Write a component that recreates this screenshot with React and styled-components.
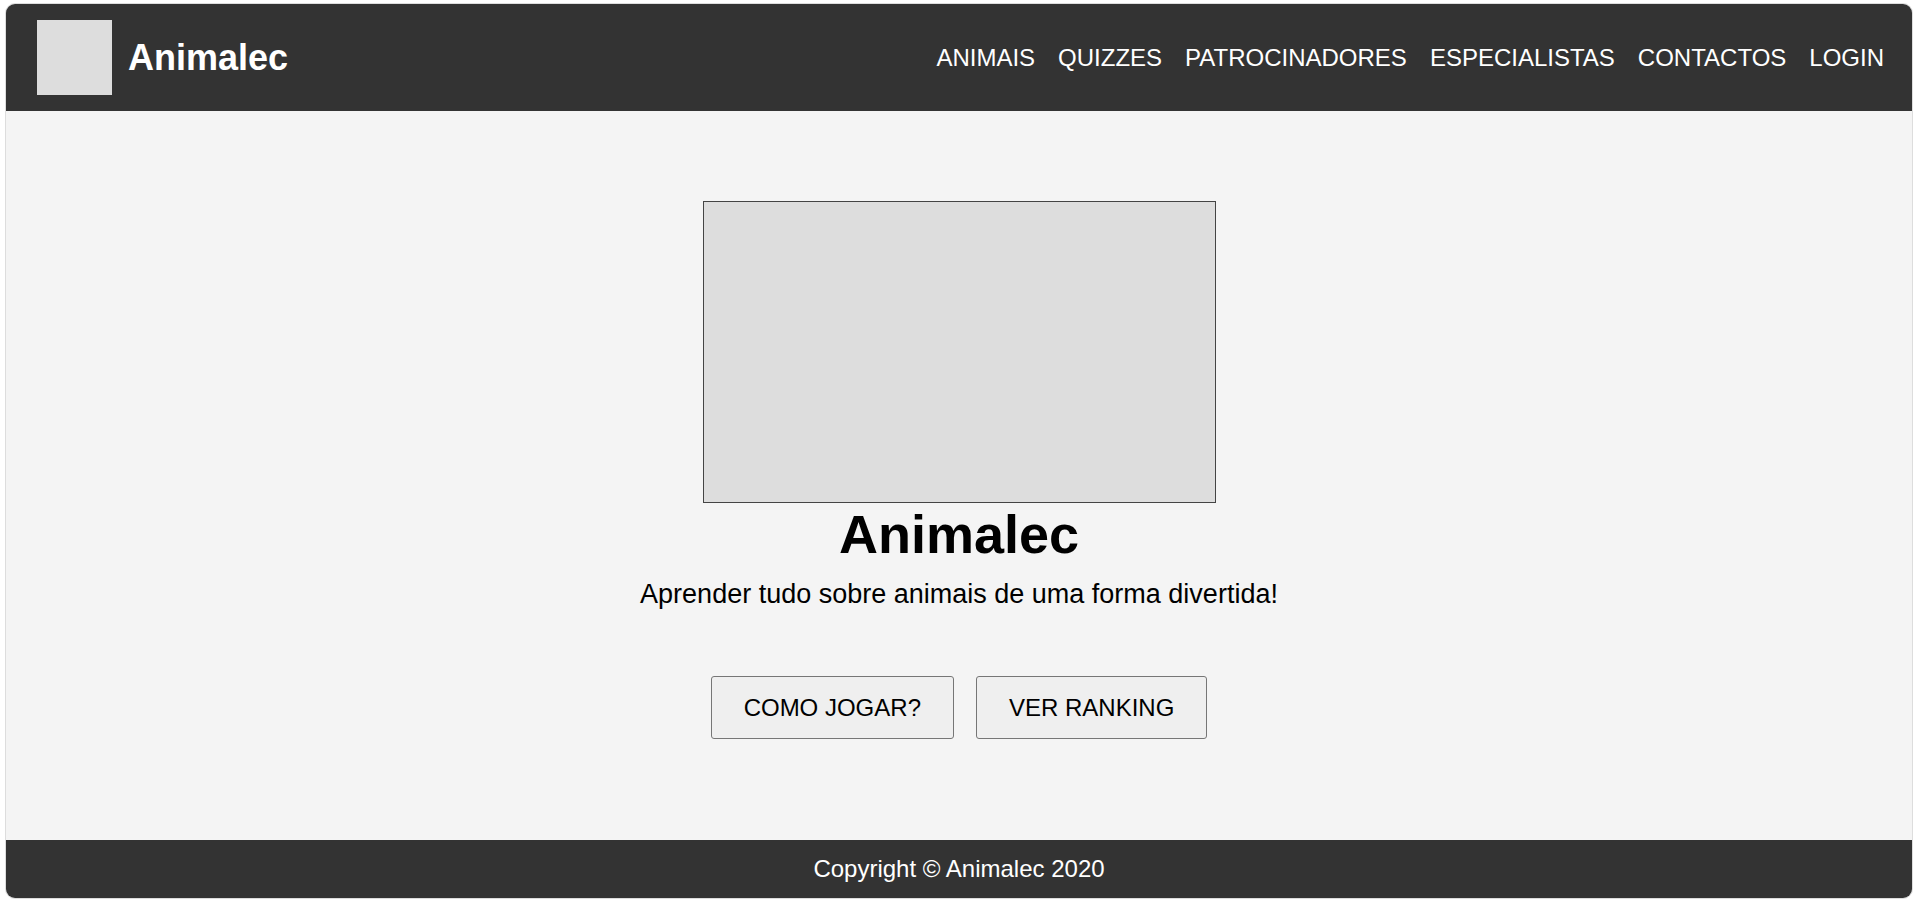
import React from 'react'
import styled, { createGlobalStyle } from 'styled-components'

const GlobalStyle = createGlobalStyle`
  html, body {
    padding: 0;
    background: #fff;
  }
  body {
    margin: 3px 5px 0;
    font-family: "Liberation Sans", Arial, sans-serif;
  }
  * {
    box-sizing: border-box;
  }
`

const Page = styled.div`
  height: calc(100vh - 4px);
  display: flex;
  flex-direction: column;
  border: 1px solid #ddd;
  border-radius: 10px;
  overflow: hidden;
  background: #f4f4f4;
`

const Header = styled.header`
  height: 107px;
  flex-shrink: 0;
  display: flex;
  align-items: center;
  justify-content: space-between;
  padding: 0 28px 0 31px;
  background: #333;
`

const Brand = styled.div`
  display: flex;
  align-items: center;
  gap: 16px;
`

const Logo = styled.div`
  width: 75px;
  height: 75px;
  background: #ddd;
`

const BrandName = styled.span`
  color: #fff;
  font-size: 36px;
  font-weight: bold;
`

const Nav = styled.nav`
  display: flex;
  gap: 23px;
`

const NavLink = styled.a`
  color: #fff;
  font-size: 24px;
  text-decoration: none;
  text-transform: uppercase;
`

const Main = styled.main`
  flex: 1;
  display: flex;
  flex-direction: column;
  align-items: center;
  padding-top: 90px;
`

const Picture = styled.div`
  width: 513px;
  height: 302px;
  border: 1px solid #444;
  background: #ddd;
`

const Title = styled.h1`
  margin: 0;
  font-size: 54px;
  font-weight: bold;
  color: #000;
`

const Subtitle = styled.p`
  margin: 14px 0 0;
  font-size: 27px;
  color: #000;
`

const Actions = styled.div`
  display: flex;
  gap: 22px;
  margin-top: 66px;
`

const Button = styled.button`
  height: 63px;
  padding: 0 32px;
  font-family: inherit;
  font-size: 24px;
  color: #000;
  background: #efefef;
  border: 1px solid #767676;
  border-radius: 3px;
  cursor: pointer;
`

const Footer = styled.footer`
  height: 58px;
  flex-shrink: 0;
  display: flex;
  align-items: center;
  justify-content: center;
  background: #333;
  color: #fff;
  font-size: 24px;
`

const links = ['Animais', 'Quizzes', 'Patrocinadores', 'Especialistas', 'Contactos', 'Login']

export default function App() {
  return (
    <>
      <GlobalStyle />
      <Page>
        <Header>
          <Brand>
            <Logo />
            <BrandName>Animalec</BrandName>
          </Brand>
          <Nav>
            {links.map(link => (
              <NavLink key={link} href="#">{link}</NavLink>
            ))}
          </Nav>
        </Header>
        <Main>
          <Picture />
          <Title>Animalec</Title>
          <Subtitle>Aprender tudo sobre animais de uma forma divertida!</Subtitle>
          <Actions>
            <Button>COMO JOGAR?</Button>
            <Button>VER RANKING</Button>
          </Actions>
        </Main>
        <Footer>Copyright © Animalec 2020</Footer>
      </Page>
    </>
  )
}
